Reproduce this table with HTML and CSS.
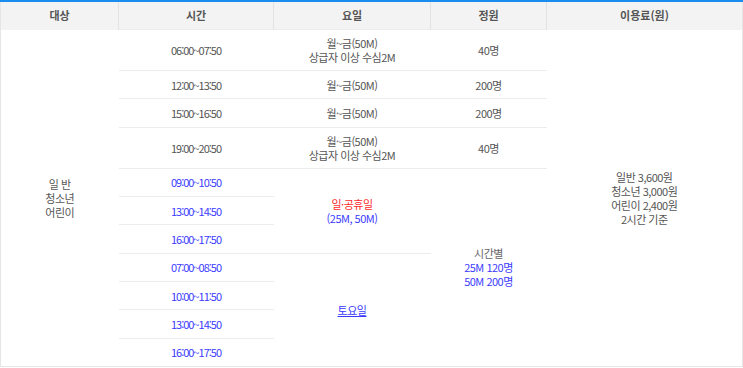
FILE: index.html
```html
<!DOCTYPE html>
<html lang="ko">
<head>
<meta charset="utf-8">
<link rel="stylesheet" href="styles.css">
</head>
<body>
<div class="wrap">
<table class="tbl">
<colgroup>
<col class="c1"><col class="c2"><col class="c3"><col class="c4"><col class="c5">
</colgroup>
<thead>
<tr><th>대상</th><th>시간</th><th>요일</th><th>정원</th><th>이용료(원)</th></tr>
</thead>
<tbody>
<tr class="two">
<td rowspan="11" class="side">일 반<br>청소년<br>어린이</td>
<td class="num">06:00~07:50</td>
<td>월~금(50M)<br>상급자 이상 수심2M</td>
<td>40명</td>
<td rowspan="11" class="side">일반 3,600원<br>청소년 3,000원<br>어린이 2,400원<br>2시간 기준</td>
</tr>
<tr><td class="num">12:00~13:50</td><td>월~금(50M)</td><td>200명</td></tr>
<tr><td class="num">15:00~16:50</td><td>월~금(50M)</td><td>200명</td></tr>
<tr class="two"><td class="num">19:00~20:50</td><td>월~금(50M)<br>상급자 이상 수심2M</td><td>40명</td></tr>
<tr>
<td class="num blue">09:00~10:50</td>
<td rowspan="3"><span class="red">일·공휴일</span><br><span class="blue">(25M, 50M)</span></td>
<td rowspan="7"><span class="cap">시간별</span><br><span class="blue">25M 120명</span><br><span class="blue">50M 200명</span></td>
</tr>
<tr><td class="num blue">13:00~14:50</td></tr>
<tr><td class="num blue">16:00~17:50</td></tr>
<tr><td class="num blue">07:00~08:50</td><td rowspan="4"><a class="link" href="#">토요일</a></td></tr>
<tr><td class="num blue">10:00~11:50</td></tr>
<tr><td class="num blue">13:00~14:50</td></tr>
<tr><td class="num blue">16:00~17:50</td></tr>
</tbody>
</table>
</div>
</body>
</html>
```
FILE: styles.css
```css
html, body { margin: 0; padding: 0; background: #fff; }
body {
  font-family: "Noto Sans CJK KR", "Noto Sans", sans-serif;
  font-size: 11px;
  color: #555;
}
.wrap { width: 742px; }
.tbl {
  width: 742px;
  table-layout: fixed;
  border-collapse: collapse;
  border-top: 2px solid #1a8cf0;
  border-left: 1px solid #e6e6e6;
  border-right: 1px solid #e6e6e6;
  border-bottom: 1px solid #e6e6e6;
}
.c1 { width: 118px; }
.c2 { width: 155px; }
.c3 { width: 157px; }
.c4 { width: 116px; }
.c5 { width: 196px; }
th {
  background: #f3f3f3;
  height: 27px;
  padding: 0;
  font-weight: bold;
  color: #555;
  border-left: 1px solid #e2e2e2;
  line-height: 15px;
}
th:first-child { border-left: none; }
td {
  text-align: center;
  vertical-align: middle;
  padding: 0 4px;
  height: 27.35px;
  line-height: 14px;
  border-top: 1px solid #ececec;
  letter-spacing: -0.5px;
}
tr.two td { height: 40px; }
td.side { border-top: none; }
.num { letter-spacing: -1px; }
.blue { color: #3b3bff; }
.red { color: #ff2a2a; }
.cap { color: #666; }
.link { color: #3b3bff; text-decoration: underline; }
```
